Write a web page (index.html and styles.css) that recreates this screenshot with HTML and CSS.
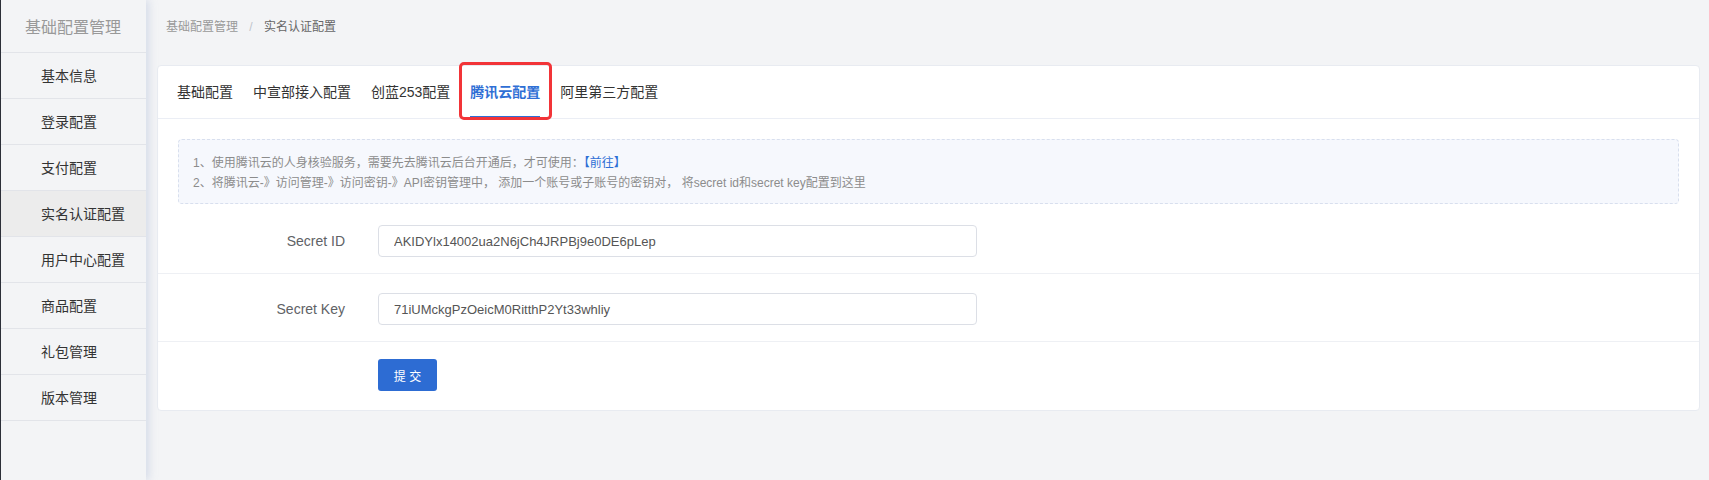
FILE: index.html
```html
<!DOCTYPE html>
<html>

<head>
  <meta name="viewport" content="width=device-width, initial-scale=1">
  <link rel="stylesheet" href="styles.css">
</head>

<body>

  <aside class="sidebar">
    <div class="sidebar-title">基础配置管理</div>
    <ul class="menu">
      <li class="menu-item">基本信息</li>
      <li class="menu-item">登录配置</li>
      <li class="menu-item">支付配置</li>
      <li class="menu-item active">实名认证配置</li>
      <li class="menu-item">用户中心配置</li>
      <li class="menu-item">商品配置</li>
      <li class="menu-item">礼包管理</li>
      <li class="menu-item">版本管理</li>
    </ul>
  </aside>

  <main class="main">
    <div class="breadcrumb">
      <span class="crumb">基础配置管理</span>
      <span class="crumb-sep">/</span>
      <span class="crumb current">实名认证配置</span>
    </div>

    <div class="card">
      <div class="tabs">
        <div class="tab">基础配置</div>
        <div class="tab">中宣部接入配置</div>
        <div class="tab">创蓝253配置</div>
        <div class="tab active">腾讯云配置<span class="mark"></span></div>
        <div class="tab">阿里第三方配置</div>
      </div>

      <div class="tips">
        <p>1、使用腾讯云的人身核验服务，需要先去腾讯云后台开通后，才可使用：<a class="link">【前往】</a></p>
        <p>2、将腾讯云-》访问管理-》访问密钥-》API密钥管理中， 添加一个账号或子账号的密钥对， 将secret id和secret key配置到这里</p>
      </div>

      <form class="form">
        <div class="form-row">
          <label class="form-label">Secret ID</label>
          <input class="form-input" type="text" value="AKIDYlx14002ua2N6jCh4JRPBj9e0DE6pLep">
        </div>
        <div class="form-row">
          <label class="form-label">Secret Key</label>
          <input class="form-input" type="text" value="71iUMckgPzOeicM0RitthP2Yt33whliy">
        </div>
        <div class="form-row last">
          <span class="form-label"></span>
          <button class="btn" type="button">提 交</button>
        </div>
      </form>
    </div>
  </main>

</body>

</html>
```

FILE: styles.css
```css
* {
  box-sizing: border-box;
}

body {
  margin: 0;
  height: 480px;
  display: flex;
  background: #f3f4f6;
  font-family: "Liberation Sans", "Noto Sans CJK SC", sans-serif;
  color: #333;
}

.sidebar {
  width: 146px;
  flex-shrink: 0;
  background: #f3f4f6;
  border-left: 1px solid #2c2f38;
  box-shadow: 3px 0 8px rgba(160, 175, 210, 0.35);
  position: relative;
  z-index: 1;
}

.sidebar-title {
  height: 53px;
  padding-top: 3px;
  line-height: 49px;
  text-align: center;
  font-size: 16px;
  color: #999;
  border-bottom: 1px solid #e2e4e9;
  padding-right: 1px;
}

.menu {
  list-style: none;
  margin: 0;
  padding: 0;
}

.menu-item {
  height: 46px;
  padding-top: 1px;
  line-height: 45px;
  padding-left: 40px;
  font-size: 14px;
  color: #333;
  border-bottom: 1px solid #e2e4e9;
}

.menu-item.active {
  background: #ececec;
}

.main {
  flex: 1;
  padding: 0 9px 0 11px;
}

.breadcrumb {
  height: 54px;
  line-height: 55px;
  padding-left: 9px;
  font-size: 12px;
  color: #999;
}

.crumb-sep {
  margin: 0 8px;
  color: #c0c4cc;
}

.crumb.current {
  color: #666;
}

.card {
  margin-top: 11px;
  background: #fff;
  border: 1px solid #e8ebf1;
  border-radius: 4px;
}

.tabs {
  display: flex;
  height: 53px;
  padding-left: 19px;
  border-bottom: 1px solid #ebeef5;
}

.tab {
  position: relative;
  height: 52px;
  line-height: 52px;
  margin-right: 20px;
  font-size: 14px;
  color: #333;
}

.tab.active {
  color: #2f6fd5;
  font-weight: bold;
  border-bottom: 2px solid #2f6fd5;
}

/* red annotation box around the current tab */
.tab .mark {
  position: absolute;
  left: -11px;
  top: -4px;
  width: 93px;
  height: 58px;
  border: 3px solid #f23438;
  border-radius: 5px;
}

.tips {
  margin: 20px 20px 0;
  padding: 13px 14px 10px;
  background: #f6f8fd;
  border: 1px dashed #d8dfee;
  border-radius: 4px;
  font-size: 12px;
  color: #8c8c8c;
}

.tips p {
  margin: 0;
  line-height: 20px;
}

.link {
  color: #2f6fd5;
}

.form {
  margin-top: 2px;
}

.form-row {
  display: grid;
  grid-template-columns: 187px 599px;
  column-gap: 33px;
  align-items: center;
  padding: 19px 0 16px;
  border-bottom: 1px solid #eef0f4;
}

.form-row.last {
  padding: 17px 0 19px;
  border-bottom: none;
}

.form-label {
  text-align: right;
  font-size: 14px;
  color: #606266;
}

.form-input {
  height: 32px;
  padding: 0 15px;
  border: 1px solid #dcdfe6;
  border-radius: 4px;
  font-family: "Liberation Sans", sans-serif;
  font-size: 13px;
  color: #555;
  outline: none;
}

.btn {
  width: 59px;
  height: 32px;
  padding: 0;
  border: none;
  border-radius: 3px;
  background: #2d6cd3;
  color: #fff;
  font-family: "Liberation Sans", "Noto Sans CJK SC", sans-serif;
  font-size: 12px;
  cursor: pointer;
}
```
